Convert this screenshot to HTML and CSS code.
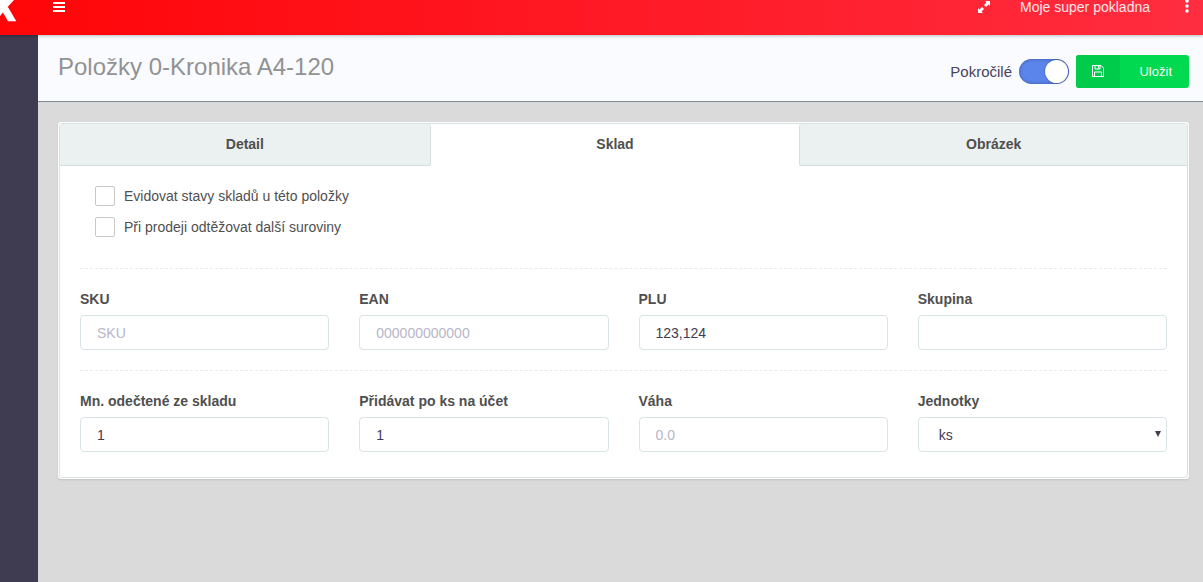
FILE: index.html
```html
<!DOCTYPE html>
<html lang="cs">
<head>
<meta charset="utf-8">
<title>Položky</title>
<link rel="stylesheet" href="styles.css">
</head>
<body>
<header class="topbar">
  <a class="brand" href="#" aria-label="Domů">
    <svg width="38" height="35" viewBox="0 0 38 35"><path d="M0 0H14L7.800 6.800L16.300 21.300H8L3 12.500L0 16Z" fill="#fff"/></svg>
  </a>
  <button class="icon-btn menu-btn" type="button" aria-label="Menu">
    <svg width="12" height="10" viewBox="0 0 12 10"><path d="M0 0h12v2H0zM0 4h12v2H0zM0 8h12v2H0z" fill="#fff"/></svg>
  </button>
  <div class="topbar-right">
    <button class="icon-btn" type="button" aria-label="Celá obrazovka">
      <svg width="12" height="12" viewBox="0 0 12 12"><path d="M7 0h5v5l-1.500-1.500L8 6 6 4l2.500-2.500zM5 12H0V7l1.500 1.500L4 6l2 2-2.500 2.500z" fill="#fff"/></svg>
    </button>
    <a class="account" href="#">Moje super pokladna</a>
    <button class="icon-btn" type="button" aria-label="Další">
      <svg width="4" height="14" viewBox="0 0 4 14" fill="#fff"><circle cx="2" cy="1" r="1.800"/><circle cx="2" cy="6" r="1.800"/><circle cx="2" cy="11" r="1.800"/></svg>
    </button>
  </div>
</header>
<div class="shell">
  <nav class="sidebar" aria-label="Navigace"></nav>
  <div class="page">
    <div class="titlebar">
      <h1 class="title">Položky 0-Kronika A4-120</h1>
      <div class="advanced">
        <label class="advanced-label" for="advanced">Pokročilé</label>
        <input class="switch" id="advanced" type="checkbox" role="switch" checked>
      </div>
      <button class="save" type="button">
        <span class="save-icon"><svg width="12" height="12" viewBox="0 0 12 12" fill="none" stroke="#fff"><path d="M.5.5H9L11.500 3V11.500H.5ZM3 .5V4H8V.5M2.500 11.500V7H9.500V11.500M6.500 1V3.500"/></svg></span>
        <span class="save-text">Uložit</span>
      </button>
    </div>
    <main class="content">
      <div class="card">
        <div class="panel">
          <div class="tabs" role="tablist">
            <button class="tab tab-first" type="button" role="tab">Detail</button>
            <button class="tab tab-active" type="button" role="tab" aria-selected="true">Sklad</button>
            <button class="tab tab-last" type="button" role="tab">Obrázek</button>
          </div>
          <form class="form">
            <div class="checks">
              <label class="check"><input class="box" type="checkbox">Evidovat stavy skladů u této položky</label>
              <label class="check"><input class="box" type="checkbox">Při prodeji odtěžovat další suroviny</label>
            </div>
            <div class="row">
              <div class="field"><label class="label" for="sku">SKU</label><input class="control" id="sku" type="text" placeholder="SKU"></div>
              <div class="field"><label class="label" for="ean">EAN</label><input class="control" id="ean" type="text" placeholder="000000000000"></div>
              <div class="field"><label class="label" for="plu">PLU</label><input class="control" id="plu" type="text" value="123,124"></div>
              <div class="field"><label class="label" for="group">Skupina</label><input class="control" id="group" type="text"></div>
            </div>
            <div class="row">
              <div class="field"><label class="label" for="amount">Mn. odečtené ze skladu</label><input class="control" id="amount" type="text" value="1"></div>
              <div class="field"><label class="label" for="step">Přidávat po ks na účet</label><input class="control" id="step" type="text" value="1"></div>
              <div class="field"><label class="label" for="weight">Váha</label><input class="control" id="weight" type="text" placeholder="0.0"></div>
              <div class="field"><label class="label" for="unit">Jednotky</label>
                <div class="select-wrap">
                  <select class="control select" id="unit"><option>ks</option></select>
                  <svg class="arrow" width="6" height="6" viewBox="0 0 6 6"><path d="M0 0H6L3 6Z" fill="#3f3b51"/></svg>
                </div>
              </div>
            </div>
          </form>
        </div>
      </div>
    </main>
  </div>
</div>
</body>
</html>
```
FILE: styles.css
```css
* { box-sizing: border-box; }
body {
  margin: 0;
  min-height: 100vh;
  display: flex;
  flex-direction: column;
  font: 14px/20px "Liberation Sans", Arial, sans-serif;
  color: #4f4f4f;
  background: #dadada;
}
button, input, select { font: inherit; color: inherit; margin: 0; }
svg { display: block; }

.topbar {
  position: relative;
  z-index: 1;
  height: 35px;
  display: flex;
  align-items: flex-start;
  background: linear-gradient(to right, #ff0508, #ff2d40);
  box-shadow: 0 1px 3px rgba(0, 0, 0, 0.25);
}
.brand { width: 38px; }
.icon-btn { padding: 0; border: 0; background: none; }
.menu-btn { margin: 2px 0 0 15px; }
.topbar-right {
  margin-left: auto;
  padding-right: 14px;
  display: flex;
  align-items: center;
  height: 14px;
}
.account { margin: 0 35px 0 30px; color: #ffe6e9; text-decoration: none; }

.shell { flex: 1; display: flex; }
.sidebar { width: 38px; background: #3f3b51; }
.page { flex: 1; min-width: 0; }

.titlebar {
  display: flex;
  align-items: center;
  min-height: 67px;
  padding: 6px 14px 0 20px;
  background: #fafbfe;
  border-bottom: 1px solid #7d8a8f;
}
.title {
  margin: 0 auto 8px 0;
  font-size: 24px;
  line-height: 30px;
  font-weight: 400;
  color: #929292;
}
.advanced {
  display: flex;
  align-items: center;
  gap: 7px;
  margin-right: 7px;
  font-size: 15px;
  color: #47435a;
}
.advanced-label { padding-top: 2px; }
.switch {
  appearance: none;
  width: 50px;
  height: 25px;
  padding: 1px;
  border-radius: 13px;
  background: #5c85ec;
  box-shadow: inset 0 0 3px 1px rgba(40, 60, 120, 0.4);
  display: flex;
  justify-content: flex-end;
}
.switch::before {
  content: "";
  width: 23px;
  height: 23px;
  border-radius: 50%;
  background: #fff;
  box-shadow: 0 0 2px rgba(0, 0, 0, 0.5);
}
.switch:not(:checked) { justify-content: flex-start; background: #ccc; }
.save {
  display: flex;
  width: 113px;
  height: 33px;
  padding: 0;
  border: 0;
  border-radius: 3px;
  overflow: hidden;
  background: #00d950;
  color: #fff;
  font-size: 13px;
}
.save-icon { width: 44px; height: 33px; display: grid; place-items: center; background: #00cb4b; }
.save-text { flex: 1; line-height: 33px; text-align: right; padding-right: 17px; }

.content { padding: 20px 14px 20px 20px; }
.card {
  padding: 1px;
  border-radius: 3px;
  background: #fff;
  box-shadow: 0 1px 2px rgba(0, 0, 0, 0.12);
}
.panel { border: 1px solid #d8e2e5; border-radius: 3px; }
.tabs { display: grid; grid-template-columns: 371fr 369fr 388fr; }
.tab {
  height: 42px;
  padding: 0 0 2px;
  border: 0 solid #d5dfe2;
  border-bottom-width: 1px;
  background: #ebf1f1;
  font-weight: 700;
}
.tab-first { border-right-width: 1px; border-radius: 3px 3px 2px 0; }
.tab-active { border-bottom-color: #fff; background: #fff; border-radius: 3px; }
.tab-last { border-left-width: 1px; border-radius: 3px 3px 0 2px; }

.form { padding: 20px 20px 25px; }
.checks { display: grid; gap: 11px; padding: 0 15px 31px; justify-items: start; }
.check { display: flex; align-items: center; gap: 9px; }
.box {
  appearance: none;
  width: 20px;
  height: 20px;
  border: 1px solid #c8c8c8;
  border-radius: 2px;
  background: #fff;
}
.box:checked { background: #5c85ec; }
.row {
  display: grid;
  grid-template-columns: repeat(4, minmax(0, 1fr));
  column-gap: 30px;
  padding-top: 20px;
  border-top: 1px dashed #e8ebec;
}
.row + .row { margin-top: 20px; }
.label { display: block; margin-bottom: 6px; font-weight: 700; }
.control {
  display: block;
  width: 100%;
  height: 35px;
  padding: 0 16px;
  border: 1px solid #d8e4e6;
  border-radius: 4px;
  background: #fff;
  color: #3f3b51;
}
.control::placeholder { color: #b8b5c8; opacity: 1; }
.select-wrap { position: relative; }
.select { appearance: none; padding-left: 20px; }
.arrow { position: absolute; right: 6px; top: 14px; pointer-events: none; }
```
